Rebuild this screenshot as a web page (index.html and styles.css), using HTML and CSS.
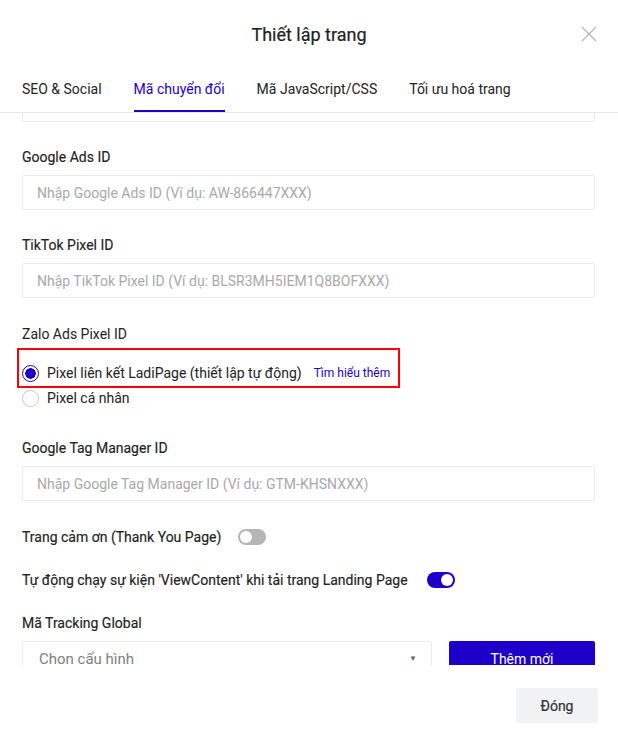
FILE: index.html
```html
<!DOCTYPE html>
<html lang="vi">
<head>
  <meta charset="UTF-8" />
  <title>Thiết lập trang</title>
  <link rel="stylesheet" href="styles.css">
</head>
<body>
  <div class="modal">
    <div class="modal-header">
      <div class="modal-title">Thiết lập trang</div>
      <button class="close-btn" aria-label="Đóng">
        <svg width="16" height="16" viewBox="0 0 16 16">
          <path d="M1 1 L15 15 M15 1 L1 15" stroke="#b5b5b5" stroke-width="1.2" fill="none" />
        </svg>
      </button>
    </div>

    <div class="tabs">
      <div class="tab">SEO &amp; Social</div>
      <div class="tab active">Mã chuyển đổi</div>
      <div class="tab">Mã JavaScript/CSS</div>
      <div class="tab">Tối ưu hoá trang</div>
    </div>

    <div class="modal-body">
      <input class="text-input scrolled" type="text" />

      <div class="field">
        <label class="label">Google Ads ID</label>
        <input class="text-input" type="text" placeholder="Nhập Google Ads ID (Ví dụ: AW-866447XXX)" />
      </div>

      <div class="field">
        <label class="label">TikTok Pixel ID</label>
        <input class="text-input" type="text" placeholder="Nhập TikTok Pixel ID (Ví dụ: BLSR3MH5IEM1Q8BOFXXX)" />
      </div>

      <div class="field">
        <label class="label light">Zalo Ads Pixel ID</label>
        <div class="highlight">
          <div class="radio-row">
            <span class="radio checked"></span>
            <span>Pixel liên kết LadiPage (thiết lập tự động)</span>
            <a class="learn-more" href="#">Tìm hiểu thêm</a>
          </div>
        </div>
        <div class="radio-row">
          <span class="radio"></span>
          <span>Pixel cá nhân</span>
        </div>
      </div>

      <div class="field gtm">
        <label class="label">Google Tag Manager ID</label>
        <input class="text-input" type="text" placeholder="Nhập Google Tag Manager ID (Ví dụ: GTM-KHSNXXX)" />
      </div>

      <div class="switch-row first">
        <span class="label">Trang cảm ơn (Thank You Page)</span>
        <span class="switch"></span>
      </div>

      <div class="switch-row wide">
        <span class="label">Tự động chạy sự kiện 'ViewContent' khi tải trang Landing Page</span>
        <span class="switch on"></span>
      </div>

      <div class="field tracking">
        <label class="label">Mã Tracking Global</label>
        <div class="tracking-row">
          <div class="select">
            <span>Chon cấu hình</span>
            <span class="caret">&#9660;</span>
          </div>
          <button class="btn-primary">Thêm mới</button>
        </div>
      </div>
    </div>

    <div class="modal-footer">
      <button class="btn-close">Đóng</button>
    </div>
  </div>
</body>
</html>
```

FILE: styles.css
```css
body {
  margin: 0;
  background-color: #fff;
  color: #222;
  font-family: Roboto, "Liberation Sans", sans-serif;
  font-size: 14px;
}

.modal {
  width: 618px;
  height: 746px;
  background-color: #fff;
}

.modal-header {
  height: 68px;
  display: flex;
  justify-content: center;
  align-items: center;
  position: relative;
}

.modal-title {
  font-size: 18px;
  color: #222;
  -webkit-text-stroke: 0.2px #222;
}

.close-btn {
  position: absolute;
  right: 21px;
  top: 26px;
  width: 16px;
  height: 16px;
  padding: 0;
  border: none;
  background: none;
  cursor: pointer;
}

.close-btn svg {
  display: block;
}

.tabs {
  display: flex;
  gap: 32px;
  padding: 0 22px;
  height: 44px;
  border-bottom: 1px solid #e8e8e8;
}

.tab {
  box-sizing: border-box;
  height: 44px;
  padding-top: 11px;
  line-height: 20px;
  color: #222;
  border-bottom: 2px solid transparent;
  cursor: pointer;
}

.tab.active {
  color: #1d00c9;
  border-bottom-color: #1d00c9;
}

.modal-body {
  height: 552px;
  overflow: hidden;
  padding: 0 23px 0 22px;
}

.text-input {
  display: block;
  box-sizing: border-box;
  width: 100%;
  height: 35px;
  padding: 0 14px;
  border: 1px solid #ebebeb;
  border-radius: 2px;
  font-family: Roboto, "Liberation Sans", sans-serif;
  font-size: 14px;
  color: #222;
  outline: none;
}

.text-input::placeholder {
  color: #a9a9a9;
}

.text-input.scrolled {
  margin-top: -26px;
}

.field {
  margin-top: 24px;
}

.label {
  display: block;
  padding-top: 1px;
  line-height: 20px;
  margin-bottom: 8px;
  color: #222;
  -webkit-text-stroke: 0.15px #222;
}

.label.light {
  -webkit-text-stroke: 0;
  padding-top: 2px;
  margin-bottom: 4px;
}

.highlight {
  box-sizing: border-box;
  width: 383px;
  height: 40px;
  margin-top: 1px;
  margin-left: -5px;
  padding: 13px 0 0 3px;
  border: 2px solid #f00;
}

.radio-row {
  display: flex;
  align-items: center;
  height: 20px;
  line-height: 20px;
  color: #222;
}

.radio {
  box-sizing: border-box;
  width: 17px;
  height: 17px;
  margin-right: 8px;
  border: 1px solid #c8c8c8;
  border-radius: 50%;
  flex-shrink: 0;
}

.radio.checked {
  border-color: #1d00c9;
  background: radial-gradient(circle, #1d00c9 0 5px, #fff 5.5px);
}

.learn-more {
  margin-left: 12px;
  color: #1d00c9;
  font-size: 12px;
  text-decoration: none;
}

.field.gtm {
  margin-top: 29px;
}

.switch-row {
  display: flex;
  align-items: center;
  margin-top: 23px;
}

.switch-row.first {
  margin-top: 26px;
}

.switch-row .label {
  display: inline;
  padding: 0;
  margin: 0;
}

.switch {
  position: relative;
  box-sizing: border-box;
  width: 28px;
  height: 16px;
  margin-left: 17px;
  border-radius: 8px;
  background-color: #b5b5b5;
  flex-shrink: 0;
}

.switch-row.wide .switch {
  margin-left: 19px;
}

.switch::after {
  content: "";
  position: absolute;
  top: 2px;
  left: 2px;
  width: 12px;
  height: 12px;
  border-radius: 50%;
  background-color: #fff;
}

.switch.on {
  background-color: #1d00c9;
}

.switch.on::after {
  left: 14px;
}

.field.tracking {
  margin-top: 22px;
}

.tracking-row {
  display: flex;
  gap: 17px;
}

.select {
  box-sizing: border-box;
  width: 410px;
  height: 35px;
  padding: 0 14px 0 16px;
  border: 1px solid #ebebeb;
  border-radius: 2px;
  display: flex;
  justify-content: space-between;
  align-items: center;
  color: #7f7f7f;
  font-size: 15px;
}

.caret {
  font-size: 8px;
  color: #666;
}

.btn-primary {
  flex: 1;
  height: 35px;
  border: none;
  border-radius: 2px;
  background-color: #1d00c9;
  color: #fff;
  font-family: Roboto, "Liberation Sans", sans-serif;
  font-size: 14px;
  cursor: pointer;
}

.modal-footer {
  display: flex;
  justify-content: flex-end;
  padding: 23px 20px 0 0;
}

.btn-close {
  width: 82px;
  height: 35px;
  border: none;
  border-radius: 2px;
  background-color: #f1f2f4;
  color: #333;
  font-family: Roboto, "Liberation Sans", sans-serif;
  font-size: 14px;
  -webkit-text-stroke: 0.2px #333;
  cursor: pointer;
}
```
